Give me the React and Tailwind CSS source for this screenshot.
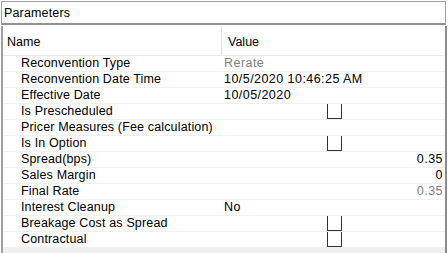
import React from 'react';

// Property grid rows: kind = text | check | num
const rows = [
    { name: 'Reconvention Type', value: 'Rerate', muted: true },
    { name: 'Reconvention Date Time', value: '10/5/2020 10:46:25 AM' },
    { name: 'Effective Date', value: '10/05/2020' },
    { name: 'Is Prescheduled', kind: 'check' },
    { name: 'Pricer Measures (Fee calculation)', value: '' },
    { name: 'Is In Option', kind: 'check' },
    { name: 'Spread(bps)', value: '0.35', kind: 'num' },
    { name: 'Sales Margin', value: '0', kind: 'num' },
    { name: 'Final Rate', value: '0.35', kind: 'num', muted: true },
    { name: 'Interest Cleanup', value: 'No' },
    { name: 'Breakage Cost as Spread', kind: 'check' },
    { name: 'Contractual', kind: 'check' },
];

const Row = ({ row }) => (
    <div className="flex h-[16px] border-b border-[#f0f0f0]">
        <div className="w-[220px] pl-[18px] whitespace-nowrap tracking-[0.15px]">{row.name}</div>
        <div className={`flex-1 flex tracking-[0.45px] ${row.kind === 'num' ? 'justify-end pr-[2px]' : row.kind === 'check' ? 'justify-center' : 'pl-[1px]'} ${row.muted ? 'text-[#808080]' : 'text-black'}`}>
            {row.kind === 'check' ? (
                <div className="w-[15px] h-[15px] border-l border-r border-b border-[#333]" />
            ) : (
                row.value
            )}
        </div>
    </div>
);

export default function App() {
    return (
        <div className="w-[448px] h-[253px] bg-white flex flex-col font-['Liberation_Sans',Arial,sans-serif] text-[12.5px] leading-[15px] text-black overflow-hidden">
            {/* Title */}
            <div className="mt-[1px] ml-[1px] w-[445px] h-[24px] shrink-0 border border-b-2 border-[#a0a0a0] border-b-[#909090] pl-[2px] pt-[4px] tracking-[0.15px]">
                Parameters
            </div>

            {/* Grid */}
            <div className="mt-[1px] ml-[1px] w-[446px] flex-1 flex flex-col border-l-2 border-r-2 border-l-[#a0a0a0] border-r-[#8c8c8c]">
                <div className="flex h-[30px] shrink-0 border-b border-[#e8e8e8]">
                    <div className="w-[219px] pl-[4px] pt-[9px] border-r border-[#e0e0e0]">Name</div>
                    <div className="flex-1 pl-[6px] pt-[9px]">Value</div>
                </div>
                {rows.map((row, idx) => (
                    <Row key={idx} row={row} />
                ))}
                <div className="flex-1 bg-[#f0f0f0]" />
            </div>
        </div>
    );
}
